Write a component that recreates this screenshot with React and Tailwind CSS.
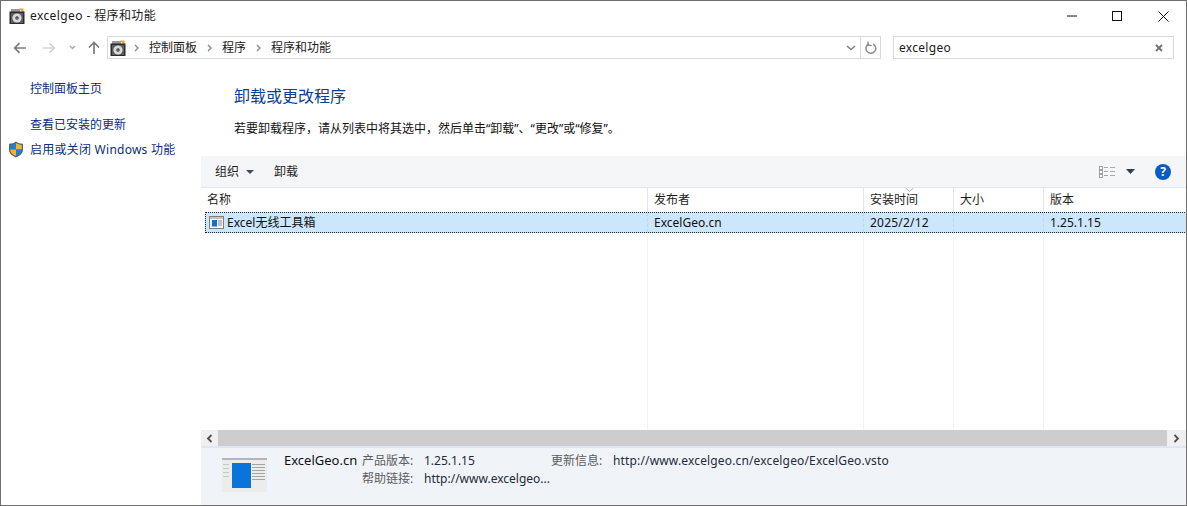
const FONT = "font-['Noto_Sans','Noto_Sans_CJK_SC',sans-serif]";
const COLS = "grid grid-cols-[447px_216px_90px_90px_1fr]";

function DiskIcon() {
  return (
    <svg width="16" height="16" viewBox="0 0 16 16" className="shrink-0">
      <path d="M2 1h9v3H2z" fill="#9a9a9a" />
      <path d="M10 .5h4.500v5z" fill="#e8a33a" />
      <rect x="0.500" y="3.500" width="15" height="12.500" fill="#2b2b2b" />
      <rect x="2" y="5" width="12" height="10" fill="#5d5d5d" />
      <circle cx="8" cy="10" r="4.600" fill="#d8d8d8" />
      <circle cx="8" cy="10" r="1.700" fill="#333" />
      <circle cx="8" cy="10" r="0.600" fill="#eee" />
    </svg>
  );
}

function Shield() {
  return (
    <svg width="16" height="17" viewBox="0 0 16 17" className="shrink-0">
      <path d="M8 .5C6 2 4 2.600 1 2.800v6c0 3.600 3 6 7 7.700 4-1.700 7-4.100 7-7.700v-6C12 2.600 10 2 8 .5z" fill="#5b6470" />
      <path d="M8 2v6.500H2.200V4C4.500 3.800 6.300 3.200 8 2z" fill="#1e7fd6" />
      <path d="M8 2c1.700 1.200 3.500 1.800 5.800 2v4.500H8z" fill="#f3b32b" />
      <path d="M2.200 8.500H8v6.600c-3-1.300-5.800-3.300-5.800-6.300z" fill="#f3b32b" />
      <path d="M8 8.500h5.800v.3c0 3-2.800 5-5.800 6.300z" fill="#1e7fd6" />
    </svg>
  );
}

function Sep() {
  return (
    <svg width="5" height="8" viewBox="0 0 5 8" className="shrink-0">
      <path d="M1 1l3 3-3 3" fill="none" stroke="#8a8a8a" strokeWidth="1.400" />
    </svg>
  );
}

function Nav() {
  return (
    <div className="flex items-center h-[27px] pl-[12px] pr-[12px]">
      <svg width="14" height="12" viewBox="0 0 14 12" className="shrink-0">
        <path d="M13 6H2M6.500 1.200L1.700 6l4.800 4.800" fill="none" stroke="#7c7c7c" strokeWidth="1.700" />
      </svg>
      <svg width="14" height="12" viewBox="0 0 14 12" className="shrink-0 ml-[15px]">
        <path d="M1 6h11M7.500 1.200L12.300 6l-4.800 4.800" fill="none" stroke="#d4d4d4" strokeWidth="1.700" />
      </svg>
      <svg width="7" height="5" viewBox="0 0 7 5" className="shrink-0 ml-[13px]">
        <path d="M1 1l2.500 2.500L6 1" fill="none" stroke="#a8a8a8" strokeWidth="1.300" />
      </svg>
      <svg width="12" height="13" viewBox="0 0 12 13" className="shrink-0 ml-[12px]">
        <path d="M6 13V2M1 6.500L6 1.500l5 5" fill="none" stroke="#7c7c7c" strokeWidth="1.700" />
      </svg>
      <div className="ml-[7px] flex items-center h-[23px] w-[774px] border border-[#d9d9d9] pl-[2px]">
        <DiskIcon />
        <div className="ml-[8px]"><Sep /></div>
        <span className="ml-[10px] text-[#1a1a1a]">控制面板</span>
        <div className="ml-[10px]"><Sep /></div>
        <span className="ml-[10px] text-[#1a1a1a]">程序</span>
        <div className="ml-[10px]"><Sep /></div>
        <span className="ml-[10px] text-[#1a1a1a]">程序和功能</span>
        <div className="flex-1" />
        <svg width="10" height="6" viewBox="0 0 10 6" className="shrink-0 mr-[4px]">
          <path d="M1 1l4 3.600L9 1" fill="none" stroke="#808080" strokeWidth="1.500" />
        </svg>
        <div className="h-full w-[20px] border-l border-[#d9d9d9] flex items-center justify-center">
          <svg width="12" height="13" viewBox="0 0 12 13">
            <path d="M4.200 2.800A4.900 4.900 0 1 0 8 3" fill="none" stroke="#8e8e8e" strokeWidth="1.500" />
            <path d="M3 .6v3.800h3.800" fill="none" stroke="#8e8e8e" strokeWidth="1.300" />
          </svg>
        </div>
      </div>
      <div className="ml-[12px] flex items-center h-[23px] w-[281px] border border-[#d9d9d9] pl-[5px] pr-[10px] text-[#1a1a1a]">
        <span className="flex-1 tracking-[0.3px]">excelgeo</span>
        <svg width="8" height="8" viewBox="0 0 8 8">
          <path d="M1 1l6 6M7 1L1 7" stroke="#707070" strokeWidth="1.800" />
        </svg>
      </div>
    </div>
  );
}

function Thumb() {
  return (
    <div className="w-[45px] h-[34px] bg-[#ececec] border-t-2 border-[#b5b5b5] flex pl-[1px] pr-[2px] pt-[3px]">
      <div className="w-[8px] flex flex-col gap-[3px] pt-[1px] pr-[2px]">
        <div className="h-px bg-[#c8c8c8]" />
        <div className="h-px bg-[#c8c8c8]" />
        <div className="h-px bg-[#c8c8c8]" />
        <div className="h-px bg-[#c8c8c8]" />
      </div>
      <div className="w-[19px] h-[25px] ml-px bg-[#0a74da]" />
      <div className="flex-1 ml-px flex flex-col gap-[2px] pt-[1px]">
        <div className="h-px bg-[#a5a5a5]" />
        <div className="h-px bg-[#a5a5a5]" />
        <div className="h-px bg-[#a5a5a5]" />
        <div className="h-px bg-[#a5a5a5]" />
        <div className="h-px bg-[#a5a5a5]" />
        <div className="h-px bg-[#a5a5a5]" />
      </div>
    </div>
  );
}

export default function App() {
  return (
    <div className={`${FONT} w-[1187px] h-[506px] bg-white border border-[#6f6f6f] flex flex-col text-[12px] leading-[16px] overflow-hidden`}>
      <div className="flex items-center h-[33px] shrink-0 pl-[8px] pb-[3px] text-[#1a1a1a]">
        <DiskIcon />
        <span className="ml-[5px] tracking-[0.4px]">excelgeo - 程序和功能</span>
        <div className="flex-1" />
        <svg width="10" height="2" viewBox="0 0 10 2" className="mr-[35px]"><path d="M0 1h10" stroke="#111" strokeWidth="1" /></svg>
        <svg width="10" height="10" viewBox="0 0 10 10" className="mr-[36px]"><rect x=".5" y=".5" width="9" height="9" fill="none" stroke="#111" /></svg>
        <svg width="11" height="11" viewBox="0 0 11 11" className="mr-[17px]"><path d="M.5 .5l10 10M10.500 .5l-10 10" stroke="#111" /></svg>
      </div>
      <Nav />
      <div className="flex flex-1 min-h-0">
        <aside className="w-[200px] shrink-0 text-[#0c2f7d] pt-[20px]">
          <div className="pl-[29px]">控制面板主页</div>
          <div className="pl-[29px] mt-[20px]">查看已安装的更新</div>
          <div className="flex items-center pl-[7px] mt-[8px] gap-[6px]">
            <Shield />
            <span className="tracking-[0.25px]">启用或关闭 Windows 功能</span>
          </div>
        </aside>
        <main className="flex-1 min-w-0 flex flex-col">
          <h1 className="ml-[33px] mt-[24px] text-[16px] leading-[22px] text-[#0a3c9c] font-normal">卸载或更改程序</h1>
          <p className="ml-[33px] mt-[14px] text-[#111]">若要卸载程序，请从列表中将其选中，然后单击“卸载”、“更改”或“修复”。</p>
          <div className="mt-[19px] h-[32px] shrink-0 bg-[#f5f6f7] border-b border-[#e6e6e6] flex items-center pl-[14px] pr-[15px] text-[#1e1e1e]">
            <span>组织</span>
            <svg width="8" height="4" viewBox="0 0 8 4" className="ml-[7px]"><path d="M0 0h8L4 4z" fill="#3c4a5e" /></svg>
            <span className="ml-[20px]">卸载</span>
            <div className="flex-1" />
            <svg width="16" height="12" viewBox="0 0 16 12">
              <rect x=".5" y=".5" width="3" height="3" fill="#fff" stroke="#a0a0a0" />
              <rect x=".5" y="4.500" width="3" height="3" fill="#fff" stroke="#a0a0a0" />
              <rect x=".5" y="8.500" width="3" height="3" fill="#fff" stroke="#a0a0a0" />
              <path d="M5 1.500h4M11 1.500h5M5 5.500h4M11 5.500h5M5 9.500h4M11 9.500h5" stroke="#a8a8a8" />
            </svg>
            <svg width="9" height="5" viewBox="0 0 9 5" className="ml-[11px]"><path d="M0 0h9L4.500 5z" fill="#2f3e55" /></svg>
            <div className="ml-[20px] w-[16px] h-[16px] rounded-full bg-[#0a5bc4] text-white font-bold text-[12px] leading-[16px] text-center">?</div>
          </div>
          <div className={`${COLS} h-[24px] shrink-0 text-[#1e1e1e]`}>
            <div className="pl-[6px] flex items-center border-r border-[#e5e5e5]">名称</div>
            <div className="pl-[6px] flex items-center border-r border-[#e5e5e5]">发布者</div>
            <div className="pl-[6px] flex items-center border-r border-[#e5e5e5] relative">
              <svg width="9" height="4" viewBox="0 0 9 4" className="absolute left-[41px] top-0"><path d="M.5 0l4 3.500 4-3.500" fill="none" stroke="#b0b0b0" /></svg>
              安装时间
            </div>
            <div className="pl-[6px] flex items-center border-r border-[#e5e5e5]">大小</div>
            <div className="pl-[6px] flex items-center">版本</div>
          </div>
          <div className="grid grid-cols-[442px_216px_90px_90px_1fr] h-[21px] shrink-0 ml-[4px] -mr-px bg-[#cce6fc] border border-dotted border-[#10243c] text-[#111]">
            <div className="flex items-center pl-[3px] border-r border-dashed border-[#b4d8f8]">
              <svg width="15" height="13" viewBox="0 0 15 13" className="shrink-0">
                <rect x=".5" y=".5" width="14" height="12" fill="#fbfbfb" stroke="#808080" />
                <rect x="1" y="1" width="13" height="2" fill="#c4c4c4" />
                <rect x="3" y="4" width="5" height="6.500" fill="#0a74da" />
                <path d="M9 5h4M9 7h4M9 9h4" stroke="#8a8a8a" />
              </svg>
              <span className="ml-[3px]">Excel无线工具箱</span>
            </div>
            <div className="flex items-center pl-[6px] border-r border-dashed border-[#b4d8f8]">ExcelGeo.cn</div>
            <div className="flex items-center pl-[6px] tracking-[0.2px] border-r border-dashed border-[#b4d8f8]">2025/2/12</div>
            <div className="flex items-center pl-[6px] border-r border-dashed border-[#b4d8f8]" />
            <div className="flex items-center pl-[6px]">1.25.1.15</div>
          </div>
          <div className={`${COLS} flex-1 min-h-0`}>
            <div className="border-r border-[#eef3f9]" />
            <div className="border-r border-[#eef3f9]" />
            <div className="border-r border-[#eef3f9]" />
            <div className="border-r border-[#eef3f9]" />
            <div />
          </div>
          <div className="h-[16px] shrink-0 flex bg-[#f0f0f0]">
            <div className="w-[17px] flex items-center justify-center">
              <svg width="7" height="9" viewBox="0 0 7 9"><path d="M5.500 1L2 4.500 5.500 8" fill="none" stroke="#505050" strokeWidth="1.800" /></svg>
            </div>
            <div className="flex-1 bg-[#cdcdcd]" />
            <div className="w-[19px] flex items-center justify-center">
              <svg width="7" height="9" viewBox="0 0 7 9"><path d="M1.500 1L5 4.500 1.500 8" fill="none" stroke="#505050" strokeWidth="1.800" /></svg>
            </div>
          </div>
          <div className="h-[59px] shrink-0 bg-[#f0f4f9] border-t-2 border-[#dce6f4] flex pl-[21px] pt-[10px]">
            <Thumb />
            <div className="ml-[17px] -mt-[5px] text-[#111] w-[78px] text-[13px] leading-[14px] whitespace-nowrap">ExcelGeo.cn</div>
            <div className="grid grid-cols-[62px_127px_62px_auto] grid-rows-[18px_18px] items-center -mt-[6px] self-start text-[#1f2a3d]">
              <span className="text-[#5c5c5c]">产品版本:</span>
              <span>1.25.1.15</span>
              <span className="text-[#5c5c5c]">更新信息:</span>
              <span className="tracking-[0.15px]">http://www.excelgeo.cn/excelgeo/ExcelGeo.vsto</span>
              <span className="text-[#5c5c5c]">帮助链接:</span>
              <span className="whitespace-nowrap">http://www.excelgeo...</span>
            </div>
          </div>
        </main>
      </div>
    </div>
  );
}
